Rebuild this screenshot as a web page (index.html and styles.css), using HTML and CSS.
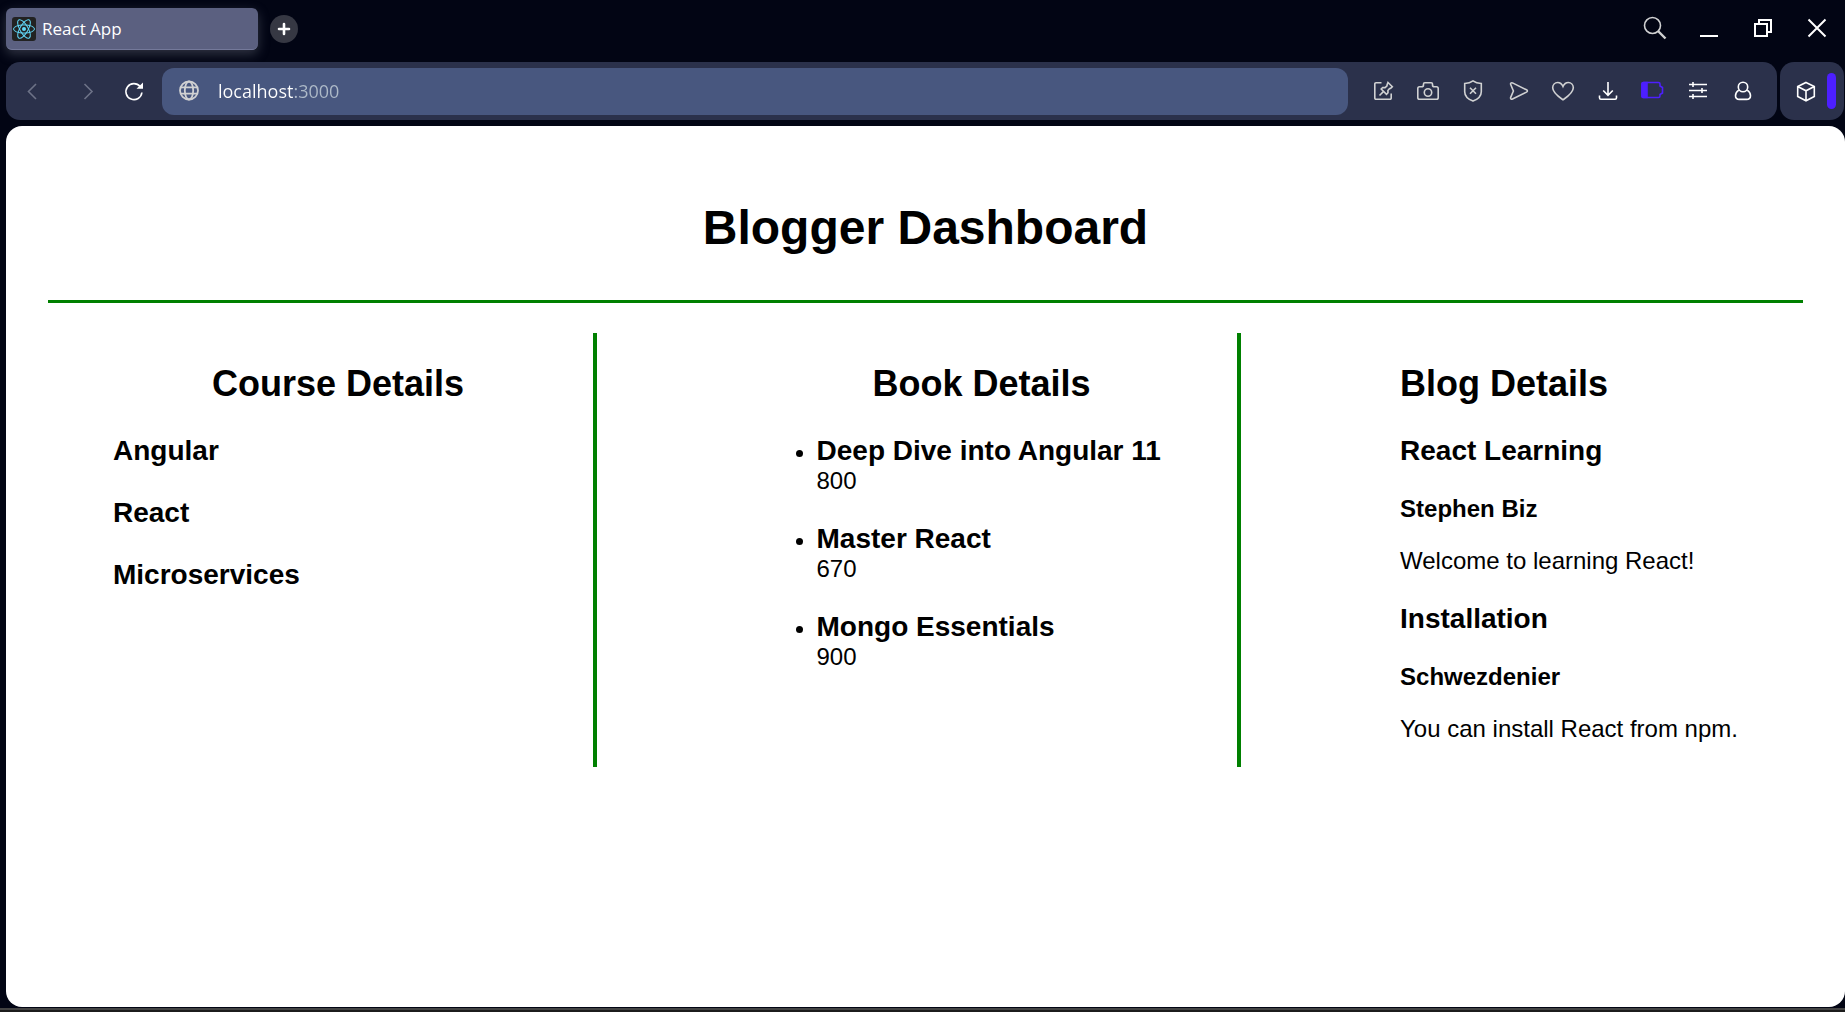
FILE: index.html
```html
<!DOCTYPE html>
<html lang="en">
<head>
<meta charset="utf-8">
<meta name="viewport" content="width=device-width, initial-scale=1">
<title>React App</title>
<link rel="stylesheet" href="styles.css">
</head>
<body class="window">
<header class="titlebar">
  <button class="tab" type="button">
    <svg class="tab-icon" width="24" height="24" viewBox="0 0 24 24" aria-hidden="true">
      <rect width="24" height="24" rx="3" fill="#222"/>
      <g fill="none" stroke="#61dafb" stroke-width="1">
        <ellipse cx="12" cy="12" rx="10.5" ry="4.1"/>
        <ellipse cx="12" cy="12" rx="10.5" ry="4.1" transform="rotate(60 12 12)"/>
        <ellipse cx="12" cy="12" rx="10.5" ry="4.1" transform="rotate(120 12 12)"/>
      </g>
      <circle cx="12" cy="12" r="2" fill="#61dafb"/>
    </svg>
    <span>React App</span>
  </button>
  <button class="new-tab" type="button" aria-label="New tab">
    <svg width="28" height="28" viewBox="0 0 28 28"><path d="M14 9v10M9 14h10" stroke="#fff" stroke-width="2.6" stroke-linecap="round"/></svg>
  </button>
  <div class="window-controls">
    <button type="button" aria-label="Search"><svg class="icon soft" viewBox="0 0 24 24"><circle cx="9.5" cy="9.5" r="8"/><path d="M15 15l7.5 7.5" stroke-width="2.4"/></svg></button>
    <button type="button" aria-label="Minimize"><svg class="icon bold" viewBox="0 0 24 24"><path d="M3 20h18"/></svg></button>
    <button type="button" aria-label="Restore"><svg class="icon bold" viewBox="0 0 24 24"><path d="M4 8h12v12H4zM8 8V4h12v12h-4"/></svg></button>
    <button type="button" aria-label="Close"><svg class="icon bold" viewBox="0 0 24 24"><path d="M3.500 3.500l17 17M20.500 3.500l-17 17"/></svg></button>
  </div>
</header>

<div class="toolbar-row">
  <nav class="toolbar" aria-label="Browser toolbar">
    <div class="history">
      <button class="dim" type="button" aria-label="Back"><svg class="icon" viewBox="0 0 24 24"><path d="M16 5l-7.500 7.500L16 20"/></svg></button>
      <button class="dim" type="button" aria-label="Forward"><svg class="icon" viewBox="0 0 24 24"><path d="M8.500 5l7.500 7.500L8.500 20"/></svg></button>
      <button type="button" aria-label="Reload"><svg class="icon" viewBox="0 0 24 24"><path d="M18.900 13.500a8 8 0 1 1-1.800-6"/><path d="M13.500 9.700H20V3.500z" fill="#fff" stroke="none"/></svg></button>
    </div>
    <div class="address">
      <svg class="icon globe" viewBox="0 0 24 24" aria-hidden="true"><circle cx="12" cy="11.500" r="9"/><ellipse cx="12" cy="11.500" rx="4.200" ry="9"/><path d="M4 8.300h16M4 14.700h16"/></svg>
      <input class="url" type="text" value="localhost:3000" aria-label="Address">
    </div>
    <div class="actions">
      <button type="button" aria-label="Pinboard"><svg class="icon soft" viewBox="0 0 24 24"><path d="M10.500 3.700H5A1.200 1.200 0 0 0 3.800 5v14A1.200 1.200 0 0 0 5 20.300h14a1.200 1.200 0 0 0 1.200-1.300v-4.500"/><path d="M17 3.500l4.300 4.300-1.800 1.600-.9.100-1.700 2 .1 2.300-1.500 1.500-5.300-5.300 1.500-1.500 2.400.1 1.900-1.800.1-1z"/><path d="M12.600 12.400L8.500 16.500"/></svg></button>
      <button type="button" aria-label="Snapshot"><svg class="icon soft" viewBox="0 0 24 24"><path d="M3.500 7.800h2c1.300 0 2-.6 2-1.800V5c0-.8.500-1.300 1.300-1.300h6.400c.8 0 1.300.5 1.300 1.300v1c0 1.200.7 1.800 2 1.800h2c1 0 1.700.7 1.700 1.700v9c0 1-.7 1.800-1.700 1.800h-17c-1 0-1.700-.8-1.700-1.800v-9c0-1 .7-1.700 1.700-1.700z"/><circle cx="12" cy="13.500" r="3.700"/></svg></button>
      <button type="button" aria-label="Ad blocker"><svg class="icon soft" viewBox="0 0 24 24"><path d="M12 1.900c2.500 1.900 5.300 2.500 8.300 2.600v8.300c0 4.500-4 7.700-8.300 9.300-4.300-1.600-8.300-4.800-8.300-9.300V4.500c3-.1 5.800-.7 8.300-2.600z"/><path d="M9 8.700l6 6M15 8.700l-6 6"/></svg></button>
      <button type="button" aria-label="Send"><svg class="icon soft" viewBox="0 0 24 24"><path d="M6.500 3.900l14 6.900c1.200.6 1.200 1.700 0 2.300l-14 6.900c-1.300.6-2.300-.4-1.800-1.600l2.700-6.400-2.700-6.500c-.5-1.200.5-2.200 1.800-1.600z"/></svg></button>
      <button type="button" aria-label="Bookmark"><svg class="icon soft" viewBox="0 0 24 24"><path d="M12 20.800C8 18 1.700 14 1.700 8.800 1.700 5.600 4 3.500 6.700 3.500c2.400 0 4.200 1.500 5.300 4 1.100-2.500 2.900-4 5.300-4 2.700 0 5 2.100 5 5.300 0 5.200-6.300 9.200-10.300 12z"/></svg></button>
      <button type="button" aria-label="Downloads"><svg class="icon" viewBox="0 0 24 24"><path d="M12 3v13M7.200 11.500L12 16.300l4.800-4.800M3.500 16.500v2.300c0 .8.600 1.400 1.400 1.400h14.200c.8 0 1.400-.6 1.400-1.400v-2.300"/></svg></button>
      <button type="button" aria-label="Battery saver"><svg class="icon battery" viewBox="0 0 24 24"><path d="M2.500 3.500h15c.9 0 1.500.6 1.500 1.500v2l2.500 1.500v5.500L19 15.500v1.500c0 .9-.6 1.500-1.500 1.500h-15c-.9 0-1.500-.6-1.500-1.500V5c0-.9.600-1.500 1.500-1.500z"/><path d="M2.500 3.500H6v15H2.500C1.600 18.500 1 17.900 1 17V5c0-.9.600-1.500 1.500-1.500z" fill="#4d1fff"/></svg></button>
      <button type="button" aria-label="Easy setup"><svg class="icon" viewBox="0 0 24 24"><path d="M3 5.500h18M3 11.500h18M3 17.500h18M7 3v5M16 9v5M7 15v5"/></svg></button>
      <button type="button" aria-label="Profile"><svg class="icon" viewBox="0 0 24 24"><circle cx="12" cy="8" r="4.700"/><path d="M7.800 11.200c-2 1.300-3.300 3.400-3.300 5.600 0 2.400 1.700 3.600 3.900 3.600h7.200c2.200 0 3.900-1.200 3.900-3.600 0-2.200-1.300-4.300-3.300-5.600"/></svg></button>
    </div>
  </nav>
  <div class="sidebox">
    <button type="button" aria-label="Extensions"><svg class="icon" viewBox="0 0 24 24"><path d="M12 3.500l8.300 4v10l-8.300 4.300-8.300-4.300v-10zM3.700 7.500l8.300 4.300 8.300-4.300M12 11.800v10"/></svg></button>
    <span class="accent"></span>
  </div>
</div>

<main class="page">
  <h1 class="page-title">Blogger Dashboard</h1>
  <div class="columns">
    <section class="column ruled">
      <h2>Course Details</h2>
      <h3>Angular</h3>
      <h3>React</h3>
      <h3>Microservices</h3>
    </section>
    <section class="column ruled">
      <h2>Book Details</h2>
      <ul class="books">
        <li><h3>Deep Dive into Angular 11</h3><p>800</p></li>
        <li><h3>Master React</h3><p>670</p></li>
        <li><h3>Mongo Essentials</h3><p>900</p></li>
      </ul>
    </section>
    <section class="column">
      <h2>Blog Details</h2>
      <article>
        <h3>React Learning</h3>
        <h4>Stephen Biz</h4>
        <p>Welcome to learning React!</p>
      </article>
      <article>
        <h3>Installation</h3>
        <h4>Schwezdenier</h4>
        <p>You can install React from npm.</p>
      </article>
    </section>
  </div>
</main>
<footer class="window-edge"></footer>
</body>
</html>
```

FILE: styles.css
```css
* { box-sizing: border-box; }

.window {
  margin: 0;
  min-height: 100vh;
  display: flex;
  flex-direction: column;
  background: #020514;
  font-family: "Open Sans", "Noto Sans", sans-serif;
}

button {
  display: flex;
  align-items: center;
  justify-content: center;
  margin: 0;
  padding: 0;
  border: 0;
  background: none;
  color: #fff;
  font: inherit;
}

.icon {
  width: 24px;
  height: 24px;
  flex: none;
  fill: none;
  stroke: #fff;
  stroke-width: 1.6;
}
.icon.soft { stroke: #d0d1d2; }
.icon.bold { stroke-width: 2; }

/* Title bar */
.titlebar {
  display: flex;
  align-items: flex-start;
  padding: 8px 1px 0 6px;
  height: 62px;
}
.tab {
  width: 252px;
  height: 42px;
  justify-content: flex-start;
  gap: 6px;
  padding: 0 6px;
  border-radius: 6px;
  border-bottom: 1px solid #74799a;
  background: #5b6080;
  font-size: 17px;
  box-shadow: 0 4px 12px rgba(120, 125, 140, 0.4);
}
.new-tab {
  width: 28px;
  height: 28px;
  margin: 7px 0 0 12px;
  border-radius: 50%;
  background: #363843;
}
.window-controls {
  display: flex;
  margin-left: auto;
}
.window-controls button {
  width: 54px;
  height: 40px;
}

/* Toolbar */
.toolbar-row {
  display: flex;
  gap: 3px;
  padding: 0 1px 0 6px;
  height: 58px;
}
.toolbar {
  flex: 1;
  display: flex;
  align-items: center;
  gap: 12px;
  padding-right: 12px;
  border-radius: 14px;
  background: #2b314b;
}
.history {
  display: grid;
  grid-template-columns: 51px 62px 31px;
}
.dim .icon { stroke: #6d7287; }
.address {
  flex: 1;
  display: flex;
  align-items: center;
  gap: 17px;
  height: 47px;
  padding: 0 15px;
  border-radius: 12px;
  background: #48577f;
}
.icon.globe { stroke: #d0d1d2; stroke-width: 1.8; }
.url {
  flex: 1;
  min-width: 0;
  padding: 0;
  border: 0;
  outline: 0;
  font: 18px/28px "Open Sans", "Noto Sans", sans-serif;
  /* host is white, port is greyed */
  color: transparent;
  background: linear-gradient(90deg, #fff 75px, #aebac8 75px);
  -webkit-background-clip: text;
  background-clip: text;
}
.actions { display: flex; }
.actions button { width: 45px; height: 40px; }
.icon.battery { stroke: #4d1fff; }
.sidebox {
  display: flex;
  align-items: center;
  gap: 9px;
  width: 64px;
  padding-left: 14px;
  border-radius: 14px;
  background: #2b314b;
}
.accent {
  width: 9px;
  height: 36px;
  border-radius: 5px;
  background: #4d1fff;
}

/* Page */
.page {
  flex: 1;
  margin: 6px 0 1px 6px;
  padding: 42px;
  border-radius: 16px;
  background: #fff;
  color: #000;
  font: 24px/28px "Liberation Sans", Arial, sans-serif;
}
.page h1, .page h2, .page h3, .page h4, .page p { margin: 0; }
.page-title {
  padding: 32px 0 45px;
  border-bottom: 3px solid green;
  font-size: 48px;
  line-height: 55px;
  text-align: center;
}
.columns {
  display: flex;
  justify-content: space-between;
  margin-top: 30px;
  padding: 0 35px;
}
.column { padding: 30px 30px 24px; }
.column.ruled {
  width: 514px;
  border-right: 4px solid green;
}
.column h2 {
  margin-bottom: 31px;
  font-size: 36px;
  line-height: 41px;
}
.ruled h2 { text-align: center; }
.column h3 { font-size: 28px; line-height: 32px; }
.column h3 + h3 { margin-top: 30px; }
.column h4 { margin: 28px 0 24px; font-size: 24px; }
article + article { margin-top: 28px; }
.books {
  display: grid;
  gap: 28px;
  margin: 0;
  padding-left: 60px;
}

.window-edge {
  height: 4px;
  border-top: 2px solid #434343;
  background: #1c1c1c;
}
```
